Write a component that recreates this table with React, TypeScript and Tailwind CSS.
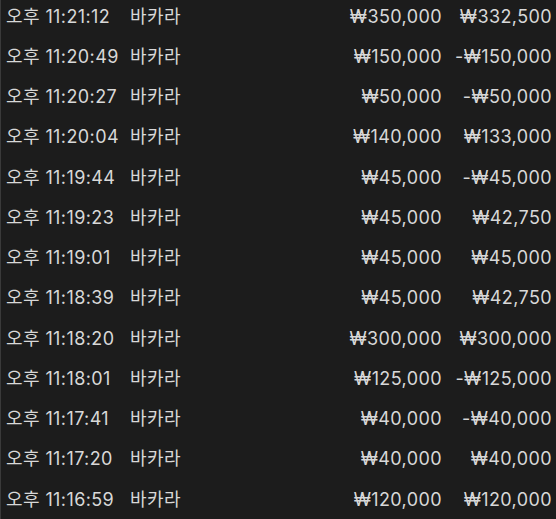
const rows: [string, string, string][] = [
  ["오후 11:21:12", "₩350,000", "₩332,500"],
  ["오후 11:20:49", "₩150,000", "-₩150,000"],
  ["오후 11:20:27", "₩50,000", "-₩50,000"],
  ["오후 11:20:04", "₩140,000", "₩133,000"],
  ["오후 11:19:44", "₩45,000", "-₩45,000"],
  ["오후 11:19:23", "₩45,000", "₩42,750"],
  ["오후 11:19:01", "₩45,000", "₩45,000"],
  ["오후 11:18:39", "₩45,000", "₩42,750"],
  ["오후 11:18:20", "₩300,000", "₩300,000"],
  ["오후 11:18:01", "₩125,000", "-₩125,000"],
  ["오후 11:17:41", "₩40,000", "-₩40,000"],
  ["오후 11:17:20", "₩40,000", "₩40,000"],
  ["오후 11:16:59", "₩120,000", "₩120,000"],
];

export default function App() {
  return (
    <div className="w-[556px] h-[519px] overflow-hidden bg-[#1c1c1c] border-l border-[#3a3a3a] text-[#d8d8d8] font-['Inter','Noto_Sans_CJK_KR',sans-serif] text-[18px] tracking-[0.4px]">
      <div className="-mt-[4px]">
        {rows.map(([time, bet, result], i) => (
          <div key={i} className="flex items-center h-[40.25px] pl-[5px] pr-[4px]">
            <span className="w-[124px] whitespace-nowrap">{time}</span>
            <span className="w-[80px]">바카라</span>
            <span className="flex-1 text-right">{bet}</span>
            <span className="w-[110px] text-right">{result}</span>
          </div>
        ))}
      </div>
    </div>
  );
}
